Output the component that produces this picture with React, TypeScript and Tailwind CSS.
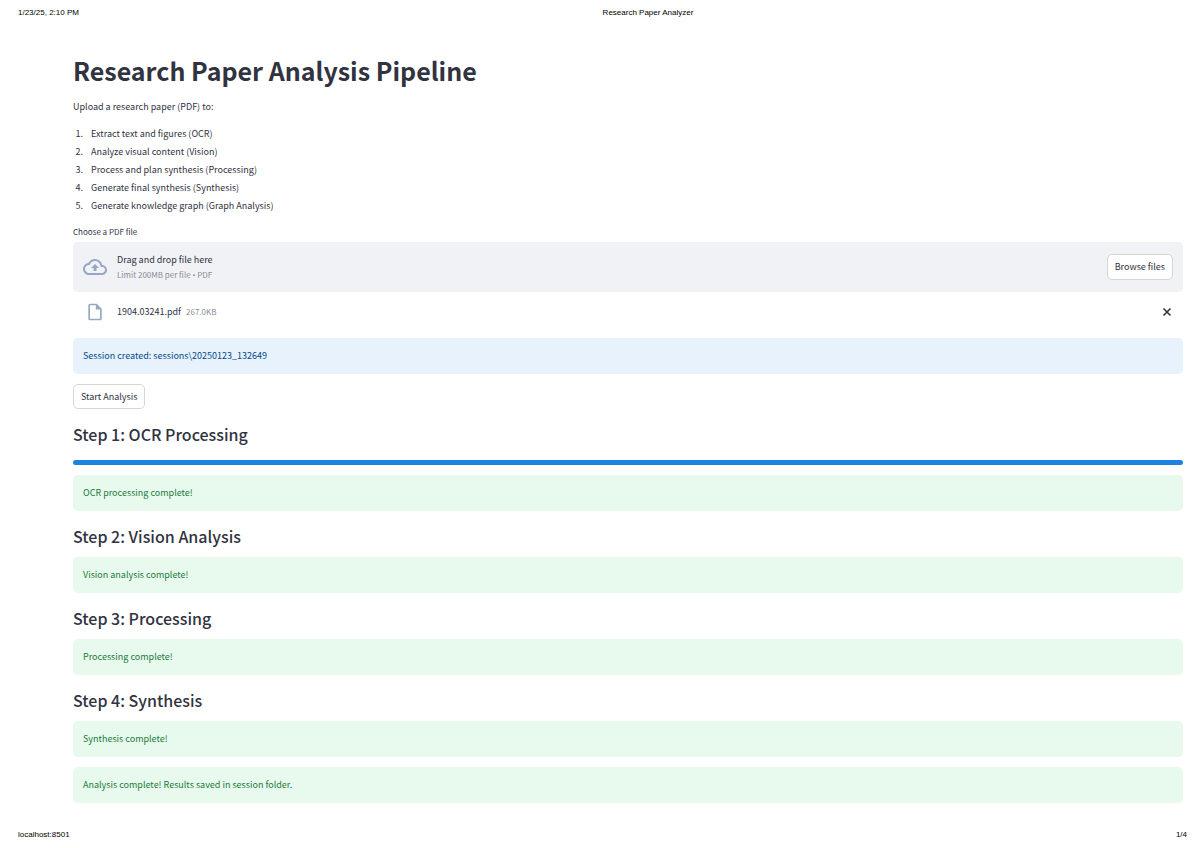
import { useRef } from "react";
import type { ReactNode } from "react";

function StepHeading({ children }: { children: ReactNode }) {
  return <h2 className="pt-1 text-[16px] leading-[22px] font-medium">{children}</h2>;
}

function Alert({ tone, children }: { tone: "info" | "success"; children: ReactNode }) {
  const colors =
    tone === "info" ? "bg-[#e8f2fc] text-[#004a8c]" : "bg-[#e8f9ee] text-[#1b7c3a]";
  return (
    <div role="status" className={`rounded-[5px] px-[10px] py-[10px] leading-[16px] ${colors}`}>
      {children}
    </div>
  );
}

const stages = [
  "Extract text and figures (OCR)",
  "Analyze visual content (Vision)",
  "Process and plan synthesis (Processing)",
  "Generate final synthesis (Synthesis)",
  "Generate knowledge graph (Graph Analysis)",
];

const buttonClass =
  "rounded-[5px] border border-[#d6d6d9] bg-white px-[7px] text-[9px] leading-[16px]";

function Uploader() {
  const input = useRef<HTMLInputElement>(null);
  return (
    <div>
      <label htmlFor="pdf" className="block text-[8px] leading-[14px]">
        Choose a PDF file
      </label>
      <input ref={input} id="pdf" type="file" accept=".pdf" className="hidden" />
      <div className="mt-[3px] flex h-[50px] items-center rounded-[5px] bg-[#f0f2f6] px-[10px]">
        <svg viewBox="0 0 24 24" className="mr-[10px] size-6 fill-[#97a6c3]" aria-hidden="true">
          <path d="M19.35 10.04A7.49 7.49 0 0 0 12 4C9.11 4 6.6 5.64 5.35 8.04A5.994 5.994 0 0 0 0 14c0 3.31 2.69 6 6 6h13c2.76 0 5-2.24 5-5 0-2.64-2.05-4.78-4.65-4.96zM19 18H6c-2.21 0-4-1.79-4-4 0-2.05 1.53-3.76 3.56-3.97l1.07-.11.5-.95A5.469 5.469 0 0 1 12 6c2.62 0 4.88 1.86 5.39 4.43l.3 1.5 1.53.11A2.98 2.98 0 0 1 22 15c0 1.65-1.35 3-3 3zM8 13h2.55v3h2.9v-3H16l-4-4z" />
        </svg>
        <div className="flex-1">
          <p className="leading-[16px]">Drag and drop file here</p>
          <p className="text-[8px] leading-[14px] text-[#8c8d96]">
            Limit 200MB per file <span className="font-['Open_Sans',sans-serif]">•</span> PDF
          </p>
        </div>
        <button type="button" className={`${buttonClass} h-[26px]`} onClick={() => input.current?.click()}>
          Browse files
        </button>
      </div>
      <div className="flex h-10 items-center px-[10px]">
        <svg viewBox="0 0 24 24" className="mr-[12px] ml-[2px] size-5 fill-[#97a6c3]" aria-hidden="true">
          <path d="M14 2H6c-1.100 0-1.990.9-1.990 2L4 20c0 1.100.89 2 1.990 2H18c1.100 0 2-.9 2-2V8l-6-6zM6 20V4h7v5h5v11H6z" />
        </svg>
        <span>1904.03241.pdf</span>
        <span className="ml-[5px] flex-1 text-[8px] text-[#8c8d96]">267.0KB</span>
        <button type="button" aria-label="Remove 1904.03241.pdf" className="p-[1px]">
          <svg viewBox="0 0 10 10" className="size-[10px]" fill="none" stroke="#31333f" strokeWidth="1.6" aria-hidden="true">
            <path d="M1.500 1.500 8.500 8.500M8.500 1.500 1.500 8.500" />
          </svg>
        </button>
      </div>
    </div>
  );
}

export default function App() {
  return (
    <div className="flex min-h-screen flex-col bg-white font-['Noto_Sans_CJK_SC',sans-serif] text-[9px] text-[#31333f]">
      <header className="flex pt-[7px] pr-[14px] pl-[18px] font-['Liberation_Sans',sans-serif] text-[8px] leading-[11px] text-black">
        <span>1/23/25, 2:10 PM</span>
        <span className="flex-1 pl-[30px] text-center">Research Paper Analyzer</span>
      </header>

      <main className="flex flex-1 flex-col gap-[10px] pt-[34px] pr-[18px] pl-[73px]">
        <h1 className="pb-[1px] text-[25px] leading-[36px] font-bold">Research Paper Analysis Pipeline</h1>
        <div>
          <p className="leading-[16px]">Upload a research paper (PDF) to:</p>
          <ol className="mt-[10px] list-decimal pl-[12px] leading-[18px]">
            {stages.map((stage) => (
              <li key={stage} className="pl-[6px]">{stage}</li>
            ))}
          </ol>
        </div>
        <Uploader />
        <div className="mt-[-4px]">
          <Alert tone="info">Session created: sessions\20250123_132649</Alert>
        </div>
        <button type="button" className={`${buttonClass} h-[25px] self-start`}>
          Start Analysis
        </button>

        <StepHeading>Step 1: OCR Processing</StepHeading>
        <div
          role="progressbar"
          aria-label="OCR progress"
          aria-valuenow={100}
          className="mt-[5px] h-[5px] rounded-full bg-[#1c83e1]"
        />
        <Alert tone="success">OCR processing complete!</Alert>

        <StepHeading>Step 2: Vision Analysis</StepHeading>
        <Alert tone="success">Vision analysis complete!</Alert>

        <StepHeading>Step 3: Processing</StepHeading>
        <Alert tone="success">Processing complete!</Alert>

        <StepHeading>Step 4: Synthesis</StepHeading>
        <Alert tone="success">Synthesis complete!</Alert>
        <Alert tone="success">Analysis complete! Results saved in session folder.</Alert>
      </main>

      <footer className="flex justify-between pr-[14px] pb-[8px] pl-[18px] font-['Liberation_Sans',sans-serif] text-[8px] leading-[11px] text-black">
        <span>localhost:8501</span>
        <span>1/4</span>
      </footer>
    </div>
  );
}
